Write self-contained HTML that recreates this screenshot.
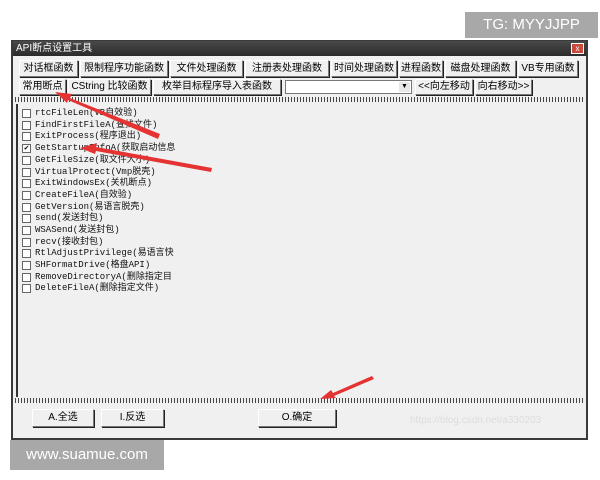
<!DOCTYPE html>
<html><head><meta charset="utf-8"><style>
body{margin:0;width:600px;height:480px;background:#fff;position:relative;overflow:hidden;font-family:"Liberation Sans","Noto Sans CJK SC",sans-serif;}
.abs{position:absolute}
.win{left:11px;top:40px;width:577px;height:400px;background:#3a3a3a;}
.title{left:13px;top:41px;width:573px;height:15px;background:linear-gradient(#4a4a4a,#2a2a2a);color:#fff;font-size:10px;line-height:15px;padding-left:3px;box-sizing:border-box}
.close{left:571px;top:43px;width:13px;height:11px;background:#c94a3a;border:1px solid #fff;box-sizing:border-box;color:#fff;font-size:8px;text-align:center;line-height:9px}
.body{left:13px;top:56px;width:573px;height:382px;background:#f0f0f0;}
.btn{position:absolute;background:#f0f0f0;border:1px solid;border-color:#fff #777 #777 #fff;box-shadow:1px 1px 0 #222;font-size:10px;text-align:center;box-sizing:border-box;color:#000;white-space:nowrap;overflow:hidden}
.list{left:16px;top:104px;width:567px;height:293px;background:#f0f0f0;border-left:2px solid #333;}
.item{position:absolute;left:4px;height:11px;font-family:"Liberation Mono","Noto Sans CJK SC",monospace;font-size:9px;line-height:11px;color:#111;white-space:nowrap}
.cb{position:absolute;left:0;top:1px;width:9px;height:9px;border:1px solid #666;background:#fff;box-sizing:border-box;font-size:8px;line-height:7px;text-align:center}
.tx{position:absolute;left:13px;top:0}
.pat{overflow:hidden;background:repeating-linear-gradient(90deg,#444 0 1px,transparent 1px 3px);}
</style></head><body>
<div class="abs" style="left:465px;top:12px;width:133px;height:26px;background:#a8a8a8;color:#fff;font-size:15px;line-height:26px;text-align:center">TG: MYYJJPP</div>
<div class="abs win"></div>
<div class="abs title">API断点设置工具</div>
<div class="abs close">x</div>
<div class="abs body"></div>
<div class="btn" style="left:19px;top:60px;width:59px;height:17px;line-height:15px">对话框函数</div>
<div class="btn" style="left:80px;top:60px;width:88px;height:17px;line-height:15px">限制程序功能函数</div>
<div class="btn" style="left:170px;top:60px;width:73px;height:17px;line-height:15px">文件处理函数</div>
<div class="btn" style="left:245px;top:60px;width:84px;height:17px;line-height:15px">注册表处理函数</div>
<div class="btn" style="left:331px;top:60px;width:66px;height:17px;line-height:15px">时间处理函数</div>
<div class="btn" style="left:399px;top:60px;width:44px;height:17px;line-height:15px">进程函数</div>
<div class="btn" style="left:445px;top:60px;width:71px;height:17px;line-height:15px">磁盘处理函数</div>
<div class="btn" style="left:518px;top:60px;width:60px;height:17px;line-height:15px">VB专用函数</div>
<div class="btn" style="left:19px;top:79px;width:47px;height:16px;line-height:14px">常用断点</div>
<div class="btn" style="left:68px;top:79px;width:83px;height:16px;line-height:14px">CString 比较函数</div>
<div class="btn" style="left:153px;top:79px;width:128px;height:16px;line-height:14px">枚举目标程序导入表函数</div>
<div class="abs" style="left:285px;top:80px;width:127px;height:14px;background:#fff;border:1px solid #777;box-sizing:border-box"><div class="abs" style="right:1px;top:1px;width:11px;height:10px;background:#e8e8e8;font-size:7px;text-align:center;line-height:10px">▼</div></div>
<div class="btn" style="left:415px;top:79px;width:58px;height:16px;line-height:14px">&lt;&lt;向左移动</div>
<div class="btn" style="left:475px;top:79px;width:57px;height:16px;line-height:14px">向右移动&gt;&gt;</div>
<div class="abs pat" style="left:15px;top:97px;width:569px;height:5px"></div>
<div class="abs list">
<div class="item" style="top:4px"><span class="cb"></span><span class="tx">rtcFileLen(VB自效验)</span></div>
<div class="item" style="top:16px"><span class="cb"></span><span class="tx">FindFirstFileA(查找文件)</span></div>
<div class="item" style="top:27px"><span class="cb"></span><span class="tx">ExitProcess(程序退出)</span></div>
<div class="item" style="top:39px"><span class="cb">✔</span><span class="tx">GetStartupInfoA(获取启动信息</span></div>
<div class="item" style="top:51px"><span class="cb"></span><span class="tx">GetFileSize(取文件大小)</span></div>
<div class="item" style="top:63px"><span class="cb"></span><span class="tx">VirtualProtect(Vmp脱壳)</span></div>
<div class="item" style="top:74px"><span class="cb"></span><span class="tx">ExitWindowsEx(关机断点)</span></div>
<div class="item" style="top:86px"><span class="cb"></span><span class="tx">CreateFileA(自效验)</span></div>
<div class="item" style="top:98px"><span class="cb"></span><span class="tx">GetVersion(易语言脱壳)</span></div>
<div class="item" style="top:109px"><span class="cb"></span><span class="tx">send(发送封包)</span></div>
<div class="item" style="top:121px"><span class="cb"></span><span class="tx">WSASend(发送封包)</span></div>
<div class="item" style="top:133px"><span class="cb"></span><span class="tx">recv(接收封包)</span></div>
<div class="item" style="top:144px"><span class="cb"></span><span class="tx">RtlAdjustPrivilege(易语言快</span></div>
<div class="item" style="top:156px"><span class="cb"></span><span class="tx">SHFormatDrive(格盘API)</span></div>
<div class="item" style="top:168px"><span class="cb"></span><span class="tx">RemoveDirectoryA(删除指定目</span></div>
<div class="item" style="top:179px"><span class="cb"></span><span class="tx">DeleteFileA(删除指定文件)</span></div>
</div>
<div class="abs pat" style="left:15px;top:398px;width:569px;height:5px"></div>
<div class="btn" style="left:32px;top:409px;width:62px;height:18px;line-height:16px">A.全选</div>
<div class="btn" style="left:101px;top:409px;width:63px;height:18px;line-height:16px">I.反选</div>
<div class="btn" style="left:258px;top:409px;width:78px;height:18px;line-height:16px">O.确定</div>
<div class="abs" style="left:410px;top:415px;font-size:10px;color:#ddd">https://blog.csdn.net/a330203</div>
<div class="abs" style="left:10px;top:440px;width:154px;height:30px;background:#a8a8a8;color:#fff;font-size:15px;line-height:30px;text-align:center">www.suamue.com</div>
<svg class="abs" style="left:0;top:0" width="600" height="480">
<g fill="#e53232">
<polygon points="160,134 70,98 72,94 55,92 67,103 68,100 158,139"/>
<polygon points="212,168 96,147 97,143 80,148 95,154 96,151 211,172"/>
<polygon points="372,376 333,393 331,390 320,399 336,398 334,396 374,379"/>
</g></svg>
</body></html>
